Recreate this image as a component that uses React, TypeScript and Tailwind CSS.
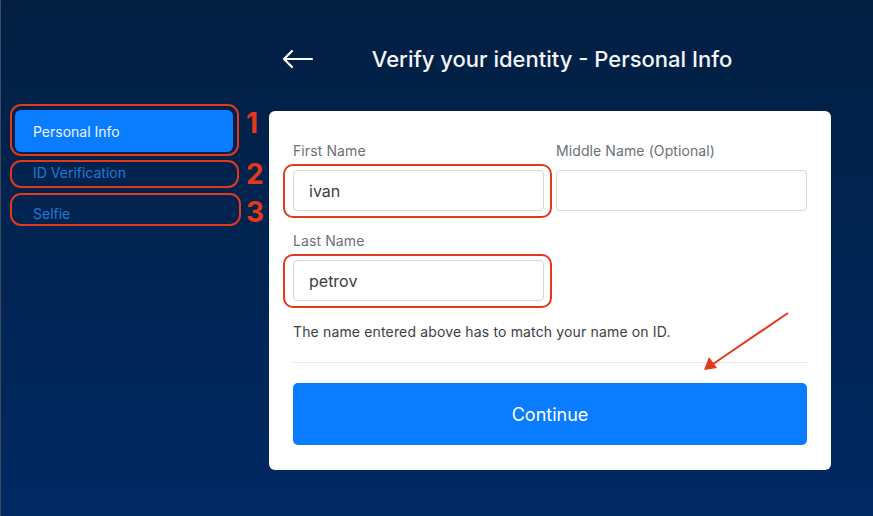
import { useState } from "react";

const steps = ["Personal Info", "ID Verification", "Selfie"];

function Field({
  label,
  value,
  onChange,
  marked,
}: {
  label: string;
  value: string;
  onChange?: (v: string) => void;
  marked?: boolean;
}) {
  return (
    <div className="flex flex-col">
      <label className="text-[14px] leading-5 tracking-[0.1px] text-[#6b7075] mb-[9px]">{label}</label>
      <div className="relative">
        <input
          value={value}
          onChange={(e) => onChange?.(e.target.value)}
          className="w-full h-[41px] rounded-[4px] border border-[#d3d7dd] bg-white px-[15px] text-[16px] text-[#3a3d40] outline-none"
        />
        {marked && (
          <div className="pointer-events-none absolute -left-[10px] -right-[8px] -top-[6px] -bottom-[7px] rounded-[10px] border-2 border-[#e2381b]" />
        )}
      </div>
    </div>
  );
}

export default function App() {
  const [first, setFirst] = useState("ivan");
  const [middle, setMiddle] = useState("");
  const [last, setLast] = useState("petrov");

  return (
    <div
      className="relative flex h-[516px] w-full overflow-hidden border-l border-[#3d4b60] bg-gradient-to-b from-[#021f42] to-[#012963]"
      style={{ fontFamily: "Inter, 'Liberation Sans', sans-serif" }}
    >
      {/* Steps */}
      <aside className="relative w-[268px] shrink-0 pt-[110px] pl-[14px]">
        <nav className="flex w-[218px] flex-col">
          {steps.map((s, i) => (
            <div
              key={s}
              className={
                i === 0
                  ? "flex h-[42px] items-center rounded-[6px] bg-[#0a7cff] px-[18px] text-[14px] text-[#eef5ff]"
                  : "flex h-[41px] items-center px-[18px] text-[14px] text-[#1c7bd9]"
              }
            >
              {s}
            </div>
          ))}
        </nav>

        {/* annotations */}
        <div className="pointer-events-none absolute left-[9px] top-[104px] h-[52px] w-[229px] rounded-[11px] border-2 border-[#e2381b]" />
        <div className="pointer-events-none absolute left-[9px] top-[160px] h-[28px] w-[229px] rounded-[11px] border-2 border-[#e2381b]" />
        <div className="pointer-events-none absolute left-[9px] top-[193px] h-[33px] w-[231px] rounded-[11px] border-2 border-[#e2381b]" />
        <span className="absolute left-[245px] top-[105px] text-[28px] leading-9 font-bold text-[#e2381b]">1</span>
        <span className="absolute left-[245px] top-[156px] text-[28px] leading-9 font-bold text-[#e2381b]">2</span>
        <span className="absolute left-[245px] top-[194px] text-[28px] leading-9 font-bold text-[#e2381b]">3</span>
      </aside>

      {/* Main */}
      <main className="w-[562px] shrink-0">
        <header className="relative mt-[44px] flex h-[30px] items-center justify-center">
          <svg
            className="absolute left-[13px] top-[5px]"
            width="32"
            height="20"
            viewBox="0 0 32 20"
            fill="none"
            stroke="white"
            strokeWidth="2.2"
            strokeLinecap="round"
            strokeLinejoin="round"
          >
            <path d="M30 10H2M10 2L2 10l8 8" />
          </svg>
          <h1 className="ml-[4px] text-[22px] font-medium text-[#f3f6fa]">Verify your identity - Personal Info</h1>
        </header>

        <section className="mt-[37px] rounded-[6px] bg-white px-[24px] pt-[30px] pb-[25px]">
          <div className="grid grid-cols-2 gap-x-[12px]">
            <Field label="First Name" value={first} onChange={setFirst} marked />
            <Field label="Middle Name (Optional)" value={middle} onChange={setMiddle} />
          </div>
          <div className="mt-[20px] grid grid-cols-2 gap-x-[12px]">
            <Field label="Last Name" value={last} onChange={setLast} marked />
          </div>
          <p className="mt-[21px] text-[14px] leading-5 tracking-[0.15px] text-[#3b3e42]">
            The name entered above has to match your name on ID.
          </p>
          <hr className="mt-[20px] border-t border-[#e6e8eb]" />
          <button className="mt-[20px] flex h-[62px] w-full items-center justify-center rounded-[5px] bg-[#0a7cff] text-[18px] text-white">
            Continue
          </button>
        </section>
      </main>

      {/* arrow annotation */}
      <svg className="pointer-events-none absolute left-0 top-0" width="873" height="516">
        <line x1="787" y1="313" x2="712" y2="364" stroke="#e2381b" strokeWidth="2" />
        <path d="M703 370 L708 357 L716 368 Z" fill="#e2381b" />
      </svg>
    </div>
  );
}
